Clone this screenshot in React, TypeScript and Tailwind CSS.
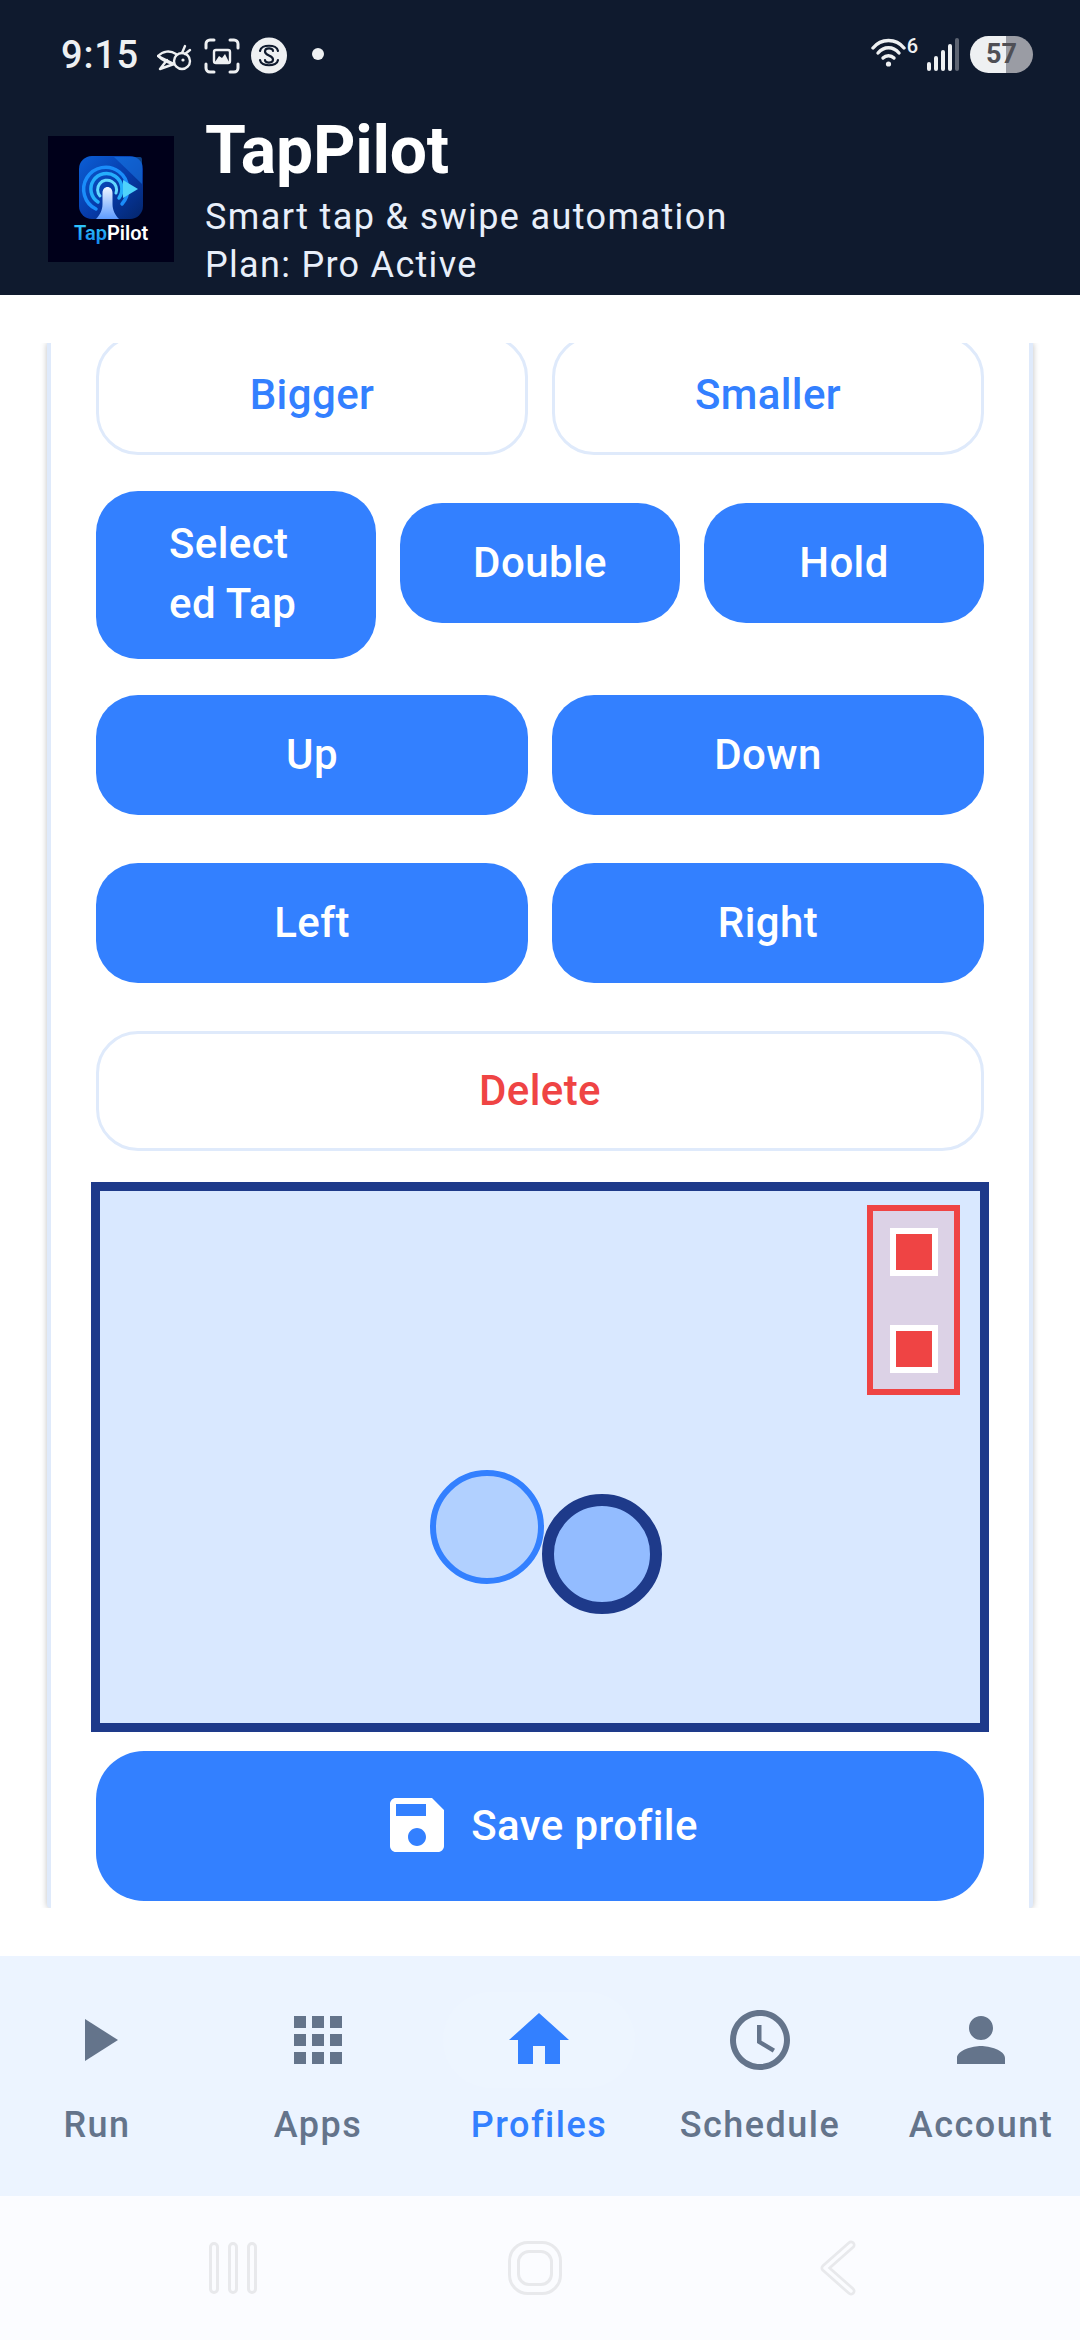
const BLUE_BTN = "flex items-center justify-center rounded-[42px] bg-[#3380ff] pb-[2px] text-[42px] font-medium tracking-[0.4px] text-white";
const OUTLINE_BTN = "flex items-center justify-center rounded-[42px] border-[3px] border-[#dfeafb] bg-white pb-[2px] text-[42px] font-medium tracking-[0.4px]";

function Logo() {
  return (
    <svg width="126" height="126" viewBox="0 0 126 126" className="mt-[26px] shrink-0 bg-[#00001a]">
      <defs>
        <linearGradient id="tile" x1="0" y1="0" x2="1" y2="1">
          <stop offset="0" stopColor="#0b5fd6" />
          <stop offset="0.55" stopColor="#063aa8" />
          <stop offset="1" stopColor="#04256a" />
        </linearGradient>
        <linearGradient id="finger" x1="0" y1="0" x2="0" y2="1">
          <stop offset="0" stopColor="#eef5ff" />
          <stop offset="1" stopColor="#5d9bff" />
        </linearGradient>
        <linearGradient id="tap" x1="0" y1="0" x2="0" y2="1">
          <stop offset="0" stopColor="#35d3ff" />
          <stop offset="1" stopColor="#1283ee" />
        </linearGradient>
      </defs>
      <rect x="31" y="20" width="64" height="63" rx="13" fill="url(#tile)" />
      <path d="M66 21 L92 21 Q94 21 94 24 L94 48 Z" fill="#1a80ee" opacity="0.5" />
      <g fill="none" strokeLinecap="round">
        <path d="M48 73 A22 22 0 1 1 74 68" stroke="#1a8dfa" strokeWidth="3.5" />
        <path d="M50 66 A15.5 15.5 0 1 1 71 62" stroke="#25aefc" strokeWidth="3.5" />
        <path d="M52 60 A9.5 9.5 0 1 1 68 57" stroke="#63d8ff" strokeWidth="3" />
      </g>
      <path d="M54.5 57 C54.5 49 64.5 49 64.5 57 L64.5 68 C64.5 74 67 79 71 83 L48 83 C52 79 54.5 74 54.5 68 Z" fill="url(#finger)" />
      <path d="M75 44 L90 53 L75 62 Z" fill="#4fd3fb" />
      <text x="26" y="104" fontFamily="Roboto, sans-serif" fontSize="20" fontWeight="600">
        <tspan fill="url(#tap)">Tap</tspan>
        <tspan fill="#ffffff">Pilot</tspan>
      </text>
    </svg>
  );
}

function StatusBar() {
  return (
    <div className="flex h-[110px] items-start pl-[61px] pr-[47px] pt-[36px] text-[#eef0f2]">
      <span className="w-[76px] text-[38px] font-medium leading-[38px] tracking-[0.8px]">9:15</span>
      {/* notification icons */}
      <svg width="35" height="28" viewBox="0 0 35 28" className="ml-[20px] mt-[7px]" fill="none" stroke="currentColor" strokeWidth="2.4" strokeLinecap="round" strokeLinejoin="round">
        <circle cx="25" cy="18" r="8" />
        <circle cx="26" cy="17" r="1.6" fill="currentColor" stroke="none" />
        <path d="M19 11 C13 7 6 8 1 13 C5 17 10 20 17 21" />
        <path d="M1 13 L17 21 L3 26 L10 17" />
        <path d="M25 10 L28 3" />
        <path d="M28 11 L33 7" />
      </svg>
      <svg width="36" height="36" viewBox="0 0 36 36" className="ml-[12px] mt-[2px]" fill="none" stroke="currentColor" strokeWidth="3" strokeLinecap="round" strokeLinejoin="round">
        <path d="M2 10 V6 A4 4 0 0 1 6 2 H10" />
        <path d="M26 2 H30 A4 4 0 0 1 34 6 V10" />
        <path d="M34 26 V30 A4 4 0 0 1 30 34 H26" />
        <path d="M10 34 H6 A4 4 0 0 1 2 30 V26" />
        <rect x="10" y="12" width="16" height="13" rx="2" strokeWidth="2.4" />
        <path d="M11 24 L15 18 L18 20 L21 16 L25 24 Z" fill="currentColor" stroke="none" />
      </svg>
      <svg width="36" height="37" viewBox="0 0 36 37" className="ml-[11px] mt-[1px]">
        <circle cx="18" cy="18.5" r="18" fill="currentColor" />
        <g fill="none" stroke="#0f1a2e" strokeWidth="2.2" strokeLinecap="round">
          <path d="M22 14 C22 10.5 14 10.5 14 14.5 C14 19 22 18 22 22.5 C22 26.5 14 26.5 14 23" />
          <path d="M9 14 C10 7 26 7 27 14" />
          <path d="M9 23 C10 30 26 30 27 23" />
        </g>
      </svg>
      <span className="ml-[25px] mt-[12px] h-[12px] w-[12px] rounded-full bg-[#eef0f2]" />
      <div className="ml-auto flex items-start">
        <svg width="35" height="30" viewBox="0 0 35 30" className="mt-[2px]" fill="none" stroke="currentColor" strokeWidth="3.4" strokeLinecap="round">
          <path d="M2 10 C10 0 25 0 33 10" />
          <path d="M7 15 C13 8 22 8 28 15" />
          <path d="M12 20 C15 17 20 17 23 20" />
          <circle cx="17.5" cy="26" r="2.6" fill="currentColor" stroke="none" />
        </svg>
        <span className="ml-[1px] text-[20px] font-medium leading-[20px]">6</span>
        <div className="ml-[9px] mt-[2px] flex h-[33px] items-end gap-[3px]">
          <span className="h-[9px] w-[4px] rounded-full bg-[#eef0f2]" />
          <span className="h-[15px] w-[4px] rounded-full bg-[#eef0f2]" />
          <span className="h-[21px] w-[4px] rounded-full bg-[#eef0f2]" />
          <span className="h-[27px] w-[4px] rounded-full bg-[#eef0f2]" />
          <span className="h-[33px] w-[4px] rounded-full bg-[#5d6472]" />
        </div>
        <div className="ml-[11px] flex h-[37px] w-[63px] items-center justify-center rounded-full bg-[linear-gradient(to_right,#eef0f2_57%,#9a9ca4_57%)] text-[27px] font-bold leading-none text-[#4f4f55]">
          57
        </div>
      </div>
    </div>
  );
}

function NavItem({ label, active, children }: { label: string; active?: boolean; children: React.ReactNode }) {
  return (
    <div className="flex w-[221px] shrink-0 flex-col items-center pt-[36px]">
      <div className={`flex h-[96px] w-[192px] items-center justify-center rounded-[48px] ${active ? "bg-[#edf5ff]" : ""}`}>
        <svg width="72" height="72" viewBox="0 0 24 24" fill={active ? "#3380ff" : "#64748b"}>
          {children}
        </svg>
      </div>
      <span className={`mt-[13px] text-[36px] font-medium leading-[48px] tracking-[1.5px] ${active ? "text-[#3380ff]" : "text-[#64748b]"}`}>
        {label}
      </span>
    </div>
  );
}

export default function App() {
  return (
    <div className="flex h-[2340px] w-[1080px] flex-col overflow-hidden bg-white font-[Roboto,sans-serif]">
      <header className="h-[295px] shrink-0 bg-[#0f1a2e]">
        <StatusBar />
        <div className="flex items-start gap-[31px] pl-[48px]">
          <Logo />
          <div>
            <div className="text-[66px] font-bold leading-[81px] tracking-[-0.2px] text-white">TapPilot</div>
            <div className="mt-[2px] text-[36px] leading-[48px] tracking-[1.38px] text-[#e8effa]">
              Smart tap &amp; swipe automation
            </div>
            <div className="text-[36px] leading-[48px] tracking-[1.3px] text-[#e8effa]">Plan: Pro Active</div>
          </div>
        </div>
      </header>

      <main className="flex h-[1661px] shrink-0 flex-col px-[47px] pb-[48px] pt-[48px]">
        <div className="flex-1 overflow-hidden rounded-b-[4px] border-x-[4px] border-[#dfeafb] bg-white px-[45px] shadow-[0_0_6px_rgba(0,0,0,0.25)] [clip-path:inset(0_-10px)]">
          <div className="-mt-[8px] grid grid-cols-2 gap-[24px]">
            <button className={`${OUTLINE_BTN} h-[120px] text-[#3380ff]`}>Bigger</button>
            <button className={`${OUTLINE_BTN} h-[120px] text-[#3380ff]`}>Smaller</button>
          </div>
          <div className="mt-[36px] grid grid-cols-3 items-start gap-[24px]">
            <button className={`${BLUE_BTN} h-[168px]`}>
              <span className="w-[134px] text-left leading-[60px]">
                Select
                <br />
                ed Tap
              </span>
            </button>
            <button className={`${BLUE_BTN} mt-[12px] h-[120px]`}>Double</button>
            <button className={`${BLUE_BTN} mt-[12px] h-[120px]`}>Hold</button>
          </div>
          <div className="mt-[36px] grid grid-cols-2 gap-[24px]">
            <button className={`${BLUE_BTN} h-[120px]`}>Up</button>
            <button className={`${BLUE_BTN} h-[120px]`}>Down</button>
          </div>
          <div className="mt-[48px] grid grid-cols-2 gap-[24px]">
            <button className={`${BLUE_BTN} h-[120px]`}>Left</button>
            <button className={`${BLUE_BTN} h-[120px]`}>Right</button>
          </div>
          <button className={`${OUTLINE_BTN} mt-[48px] h-[120px] w-full text-[#ef4444]`}>Delete</button>

          {/* free canvas: tap targets sit where the user dropped them */}
          <div className="relative -mx-[5px] mt-[31px] h-[550px] border-[9px] border-[#1e3a8a] bg-[#d9e8ff]">
            <div className="absolute left-[767px] top-[14px] flex h-[190px] w-[93px] flex-col items-center gap-[49px] border-[6px] border-[#ef4444] bg-[#dcd2e6] pt-[17px]">
              <span className="h-[48px] w-[48px] border-[6px] border-white bg-[#ef4444]" />
              <span className="h-[48px] w-[48px] border-[6px] border-white bg-[#ef4444]" />
            </div>
            <span className="absolute left-[330px] top-[279px] h-[114px] w-[114px] rounded-full border-[6px] border-[#3380ff] bg-[#b1d0ff]" />
            <span className="absolute left-[442px] top-[303px] h-[120px] w-[120px] rounded-full border-[12px] border-[#1e3a8a] bg-[#93bcff]" />
          </div>

          <button className={`${BLUE_BTN} mt-[19px] h-[150px] w-full gap-[27px] rounded-[48px] pl-[8px]`}>
            <svg width="72" height="72" viewBox="0 0 24 24" fill="#ffffff" className="-ml-[9px] -mr-[9px]">
              <path d="M17 3H5c-1.11 0-2 .9-2 2v14c0 1.1.89 2 2 2h14c1.1 0 2-.9 2-2V7l-4-4zm-5 16c-1.66 0-3-1.34-3-3s1.34-3 3-3 3 1.34 3 3-1.34 3-3 3zm3-10H5V5h10v4z" />
            </svg>
            Save profile
          </button>
        </div>
      </main>

      <nav className="flex h-[240px] shrink-0 justify-center bg-[#ecf4ff] pr-[2px]">
        <NavItem label="Run">
          <path d="M8 5v14l11-7z" />
        </NavItem>
        <NavItem label="Apps">
          <path d="M4 8h4V4H4v4zm6 12h4v-4h-4v4zm-6 0h4v-4H4v4zm0-6h4v-4H4v4zm6 0h4v-4h-4v4zm6-10v4h4V4h-4zm-6 4h4V4h-4v4zm6 6h4v-4h-4v4zm0 6h4v-4h-4v4z" />
        </NavItem>
        <NavItem label="Profiles" active>
          <path d="M10 20v-6h4v6h5v-8h3L12 3 2 12h3v8z" />
        </NavItem>
        <NavItem label="Schedule">
          <path d="M11.99 2C6.47 2 2 6.48 2 12s4.47 10 9.99 10C17.52 22 22 17.52 22 12S17.52 2 11.99 2zM12 20c-4.42 0-8-3.58-8-8s3.58-8 8-8 8 3.58 8 8-3.58 8-8 8z" />
          <path d="M12.5 7H11v6l5.25 3.15.75-1.23-4.5-2.67z" />
        </NavItem>
        <NavItem label="Account">
          <path d="M12 12c2.21 0 4-1.79 4-4s-1.79-4-4-4-4 1.79-4 4 1.79 4 4 4zm0 2c-2.67 0-8 1.34-8 4v2h16v-2c0-2.66-5.33-4-8-4z" />
        </NavItem>
      </nav>

      {/* android system buttons */}
      <div className="flex h-[144px] shrink-0 items-center bg-[#fbfcff] pl-[209px]">
        <div className="flex h-[52px] gap-[9px]">
          <span className="w-[10px] rounded-full border-[3px] border-[#e8e9ec]" />
          <span className="w-[10px] rounded-full border-[3px] border-[#e8e9ec]" />
          <span className="w-[10px] rounded-full border-[3px] border-[#e8e9ec]" />
        </div>
        <div className="ml-[251px] flex h-[54px] w-[54px] items-center justify-center rounded-[20px] border-[3px] border-[#e8e9ec]">
          <span className="h-[36px] w-[36px] rounded-[12px] border-[3px] border-[#e8e9ec]" />
        </div>
        <svg width="38" height="56" viewBox="0 0 38 56" fill="none" strokeLinecap="round" strokeLinejoin="round" className="ml-[257px]">
          <path d="M32 5 L6 28 L32 51" stroke="#e8e9ec" strokeWidth="9" />
          <path d="M32 5 L6 28 L32 51" stroke="#fbfcff" strokeWidth="3.5" />
        </svg>
      </div>
    </div>
  );
}
